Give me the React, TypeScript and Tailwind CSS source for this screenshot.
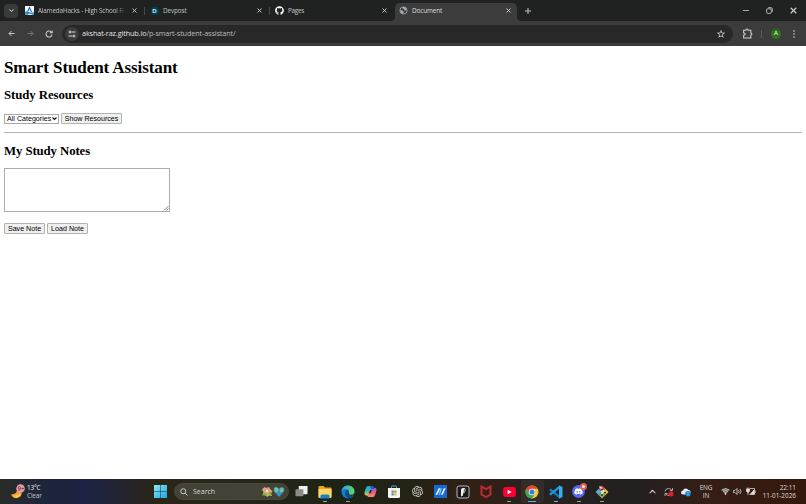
import type { ReactNode } from 'react';
import { FaDiscord, FaGithub } from 'react-icons/fa';
import { SiOpenai } from 'react-icons/si';
import { MdStarBorder } from 'react-icons/md';

function CloseIcon({ className = '' }: { className?: string }) {
  return (
    <svg viewBox="0 0 10 10" className={className} fill="none" stroke="currentColor" strokeWidth="1.8">
      <path d="M1 1l8 8M9 1L1 9" />
    </svg>
  );
}

function AlamedaIcon() {
  return (
    <svg viewBox="0 0 18 18" className="h-[9px] w-[9px] shrink-0">
      <path fill="#f4f8fb" d="M0 0h18v18H0z" />
      <path fill="none" stroke="#1d67a8" strokeWidth="2.2" d="M5 12L9 3l4 9" />
      <path fill="#3b9fd4" d="M0 12q4-3 9 1 5 3 9-1v6h-3l-5-3-6 3H0z" />
      <path fill="none" stroke="#205a9b" strokeWidth="1.500" d="M3 15q3-3 6-1t6-1" />
    </svg>
  );
}

function DevpostIcon() {
  return (
    <span className="flex h-[9px] w-[9px] shrink-0 items-center justify-center">
      <span className="flex h-[8px] w-[8px] items-center justify-center rounded-[3px] bg-[#063e54] pt-px font-['Liberation_Sans',sans-serif] text-[6px] leading-none font-bold text-[#c8edf7]">
        D
      </span>
    </span>
  );
}

function GlobeIcon() {
  return (
    <svg viewBox="0 0 18 18" className="h-[9px] w-[9px] shrink-0">
      <circle cx="9" cy="9" r="7.200" fill="#3c3c3c" stroke="#a9adb3" strokeWidth="1.700" />
      <path fill="#a9adb3" d="M8 2q5-1 7 4l-1 3h-3l-1-3-3-1zM2 8l5 1 3 3-1 2-1 2q-5-2-6-8z" />
    </svg>
  );
}

function Tab({
  icon,
  title,
  className,
  titleClass,
}: {
  icon: ReactNode;
  title: string;
  className: string;
  titleClass: string;
}) {
  return (
    <div className={`flex h-full shrink-0 items-center ${className}`}>
      {icon}
      <span className={`ml-[4px] whitespace-nowrap ${titleClass}`}>{title}</span>
      <CloseIcon className="ml-auto h-[5px] w-[5px] shrink-0 text-[#d5d7d6]" />
    </div>
  );
}

function TabStrip() {
  return (
    <div className="flex h-[21px] shrink-0 items-center bg-[#1f2221] pl-[4px] text-[6.400px] text-[#c3c6c4]">
      <div className="flex h-[14px] w-[14px] shrink-0 items-center justify-center rounded-[4px] bg-[#383b39]">
        <svg viewBox="0 0 10 10" className="h-[5px] w-[5px]" fill="none" stroke="#e1e3e2" strokeWidth="2">
          <path d="M1 3l4 4 4-4" />
        </svg>
      </div>
      <Tab
        icon={<AlamedaIcon />}
        title="AlamedaHacks - High School Fi"
        className="ml-[7px] w-[112px]"
        titleClass="w-[88px] tracking-[-0.180px] [mask-image:linear-gradient(to_right,#000_88%,transparent)]"
      />
      <span className="ml-[7px] h-[8px] w-px shrink-0 bg-[#454846]" />
      <Tab icon={<DevpostIcon />} title="Devpost" className="ml-[5px] w-[112px]" titleClass="tracking-[-0.120px]" />
      <span className="ml-[7px] h-[8px] w-px shrink-0 bg-[#454846]" />
      <Tab
        icon={<FaGithub className="h-[9px] w-[9px] text-white" />}
        title="Pages"
        className="ml-[5px] w-[112px]"
        titleClass="tracking-[-0.300px]"
      />
      <div className="relative ml-[8px] flex h-[18px] w-[122px] shrink-0 self-end rounded-t-[5px] bg-[#3c3c3c]">
        <span className="absolute bottom-0 -left-[4px] h-[4px] w-[4px] bg-[radial-gradient(circle_at_0_0,transparent_4px,#3c3c3c_4px)]" />
        <span className="absolute -right-[4px] bottom-0 h-[4px] w-[4px] bg-[radial-gradient(circle_at_100%_0,transparent_4px,#3c3c3c_4px)]" />
        <Tab
          icon={<GlobeIcon />}
          title="Document"
          className="ml-[4px] w-[112px] pb-[3px]"
          titleClass="tracking-[-0.130px] text-[#dcdcdc]"
        />
      </div>
      <svg viewBox="0 0 10 10" className="ml-[8px] h-[6px] w-[6px]" stroke="#d5d7d6" strokeWidth="1.500">
        <path d="M5 0v10M0 5h10" />
      </svg>
      <div className="mr-[9px] ml-auto flex items-center text-[#c6c8c7]">
        <span className="h-px w-[6px] bg-[#a3a5a4]" />
        <svg viewBox="0 0 12 12" className="ml-[17px] h-[7px] w-[7px]" fill="none" stroke="currentColor" strokeWidth="1.500">
          <rect x="1" y="3" width="8" height="8" rx="2" />
          <path d="M4 1h4q3 0 3 3v4" />
        </svg>
        <CloseIcon className="ml-[17px] h-[7px] w-[7px]" />
      </div>
    </div>
  );
}

function Toolbar() {
  return (
    <div className="flex h-[25px] shrink-0 items-center bg-[#3c3c3c] pl-[8px] text-[#d0d0d0]">
      <svg viewBox="0 0 14 14" className="h-[7px] w-[7px]" fill="none" stroke="currentColor" strokeWidth="1.900">
        <path d="M13 7H2M7 2L2 7l5 5" />
      </svg>
      <svg viewBox="0 0 14 14" className="ml-[12px] h-[7px] w-[7px] text-[#797979]" fill="none" stroke="currentColor" strokeWidth="1.900">
        <path d="M1 7h11M7 2l5 5-5 5" />
      </svg>
      <svg viewBox="0 0 14 14" className="ml-[11px] h-[8px] w-[8px]" fill="none" stroke="currentColor" strokeWidth="1.800">
        <path d="M11.500 4A5.300 5.300 0 1 0 12.300 8M12.500 1v4h-4" />
      </svg>
      <div className="ml-[9px] flex h-[18px] w-[671px] shrink-0 items-center rounded-full bg-[#282828] pl-[3px]">
        <span className="flex h-[14px] w-[14px] items-center justify-center rounded-full bg-[#3c3c3c]">
          <svg viewBox="0 0 16 16" className="h-[8px] w-[8px]" fill="none" stroke="#dedede" strokeWidth="1.900">
            <path d="M7 4h8M1 12h8" />
            <circle cx="4" cy="4" r="2" />
            <circle cx="12" cy="12" r="2" />
          </svg>
        </span>
        <span className="ml-[3px] text-[7.200px] tracking-[-0.090px] text-[#bcbcbc]">
          <span className="text-[#e4e4e4]">akshat-raz.github.io</span>/p-smart-student-assistant/
        </span>
        <MdStarBorder className="mr-[7px] ml-auto h-[10px] w-[10px]" />
      </div>
      <svg viewBox="0 0 20 20" className="ml-[9px] h-[11px] w-[11px] shrink-0" fill="none" stroke="currentColor" strokeWidth="1.900">
        <path d="M3 4h4q0-2 2-2t2 2h5v5q2 0 2 2t-2 2v5H3v-5q3 0 3-2t-3-2z" />
      </svg>
      <span className="ml-[8px] h-[8px] w-px shrink-0 bg-[#5d5d5d]" />
      <span className="ml-[9px] flex h-[10px] w-[10px] shrink-0 items-center justify-center rounded-full bg-[#2f741c] font-['Liberation_Sans',sans-serif] text-[5.800px] leading-none text-white">
        A
      </span>
      <svg viewBox="0 0 4 16" className="ml-[12px] h-[8px] w-[2px]" fill="#d5d5d5">
        <circle cx="2" cy="2" r="1.600" />
        <circle cx="2" cy="8" r="1.600" />
        <circle cx="2" cy="14" r="1.600" />
      </svg>
    </div>
  );
}

function PageButton({ children, className }: { children: ReactNode; className: string }) {
  return (
    <button
      className={`h-[11px] shrink-0 rounded-[1px] border border-[#b2b2b2] bg-[#efefef] pt-px text-center text-[7.110px] leading-[8px] whitespace-nowrap ${className}`}
    >
      {children}
    </button>
  );
}

function Page() {
  return (
    <main className="flex-1 bg-white px-[4px] pt-[12px] font-['Liberation_Sans',Arial,sans-serif] text-black">
      <h1 className="font-['Liberation_Serif',serif] text-[17.070px] leading-[20px] font-bold tracking-[-0.120px]">
        Smart Student Assistant
      </h1>
      <h2 className="mt-[10px] font-['Liberation_Serif',serif] text-[12.800px] leading-[15px] font-bold tracking-[-0.080px]">
        Study Resources
      </h2>
      <div className="mt-[10px] flex h-[11px] items-center gap-[2px]">
        <button className="flex h-[10px] w-[55px] items-center justify-between border border-[#a8a8a8] bg-white pr-px pl-[2px] text-[7.110px] leading-[8px] whitespace-nowrap">
          All Categories
          <svg viewBox="0 0 10 10" className="h-[5px] w-[5px] shrink-0" fill="none" stroke="#111" strokeWidth="2.200">
            <path d="M1 3l4 4 4-4" />
          </svg>
        </button>
        <PageButton className="w-[61px] tracking-[-0.020px]">Show Resources</PageButton>
      </div>
      <hr className="mt-[8px] border-t border-[#b4b4b4]" />
      <h2 className="mt-[11px] font-['Liberation_Serif',serif] text-[12.800px] leading-[15px] font-bold tracking-[-0.100px]">
        My Study Notes
      </h2>
      <div className="mt-[9px] flex h-[43.500px] w-[165.500px] items-end justify-end border border-[#acacac]">
        <svg viewBox="0 0 10 10" className="h-[5px] w-[5px]" stroke="#666" strokeWidth="1.500">
          <path d="M0 9l9-9M5 9l4-4" />
        </svg>
      </div>
      <div className="mt-[11.500px] flex gap-[2px]">
        <PageButton className="w-[41px]">Save Note</PageButton>
        <PageButton className="w-[41px]">Load Note</PageButton>
      </div>
    </main>
  );
}

function FolderIcon() {
  return (
    <svg viewBox="0 0 28 28" className="h-[14px] w-[14px]">
      <path fill="#e7a52c" d="M1 4q0-2 2-2h8l3 3h11q2 0 2 2v17H1z" />
      <path fill="#ffd562" d="M1 8h26v16q0 2-2 2H3q-2 0-2-2z" />
      <path fill="#1681cf" d="M5 27v-5q0-3 3-3h12q3 0 3 3v5z" />
    </svg>
  );
}

function EdgeIcon() {
  return (
    <svg viewBox="0 0 28 28" className="h-[14px] w-[14px]">
      <defs>
        <linearGradient id="edgeTop" x1="0" x2="1" y1="0.300" y2="0.500">
          <stop stopColor="#29a9ed" />
          <stop offset="1" stopColor="#65d45b" />
        </linearGradient>
      </defs>
      <circle cx="14" cy="14" r="13" fill="#147bd1" />
      <path fill="url(#edgeTop)" d="M1 13C2 5 8 1 14 1c8 0 13 6 13 12 0 5-4 7-8 7-3 0-5-1-5-2s2-2 2-5-3-5-7-5c-5 0-7 3-8 5z" />
      <path fill="#0d4d91" d="M9 13c-3 7 2 14 9 13 4-1 6-3 7-5-5 3-11 0-11-5 0-2 1-3 2-4-2-2-6-2-7 1z" />
      <path fill="#1e241b" d="M15 14c-2 3-1 6 3 7 3 1 6 0 9-2l1-3c-3 4-10 5-12 2z" />
    </svg>
  );
}

function CopilotIcon() {
  return (
    <svg viewBox="0 0 28 28" className="h-[13px] w-[13px]">
      <defs>
        <linearGradient id="copilotLeft" x2="0" y2="1">
          <stop stopColor="#249ee9" />
          <stop offset="0.500" stopColor="#35b9a2" />
          <stop offset="1" stopColor="#e4cc45" />
        </linearGradient>
        <linearGradient id="copilotRight" x2="0" y2="1">
          <stop stopColor="#a55be8" />
          <stop offset="0.500" stopColor="#e95294" />
          <stop offset="1" stopColor="#ff9e4c" />
        </linearGradient>
      </defs>
      <path fill="url(#copilotLeft)" d="M9 2h8q3 0 4 4l1 3h-5q-2 0-3 3l-3 8q-1 3-4 3-6 0-6-6 0-3 3-10 1-5 5-5z" />
      <path fill="url(#copilotRight)" d="M21 6q6 0 6 5 0 3-3 10-1 5-6 5h-7q-3 0-4-4 3 0 4-3l3-9q1-4 4-4z" />
      <path fill="#175fc5" d="M13 2h4q3 0 4 4l1 3h-5q-3 0-4-7z" />
      <path fill="#26271c" d="M13 11h4l-3 7h-4z" />
    </svg>
  );
}

function StoreIcon() {
  return (
    <svg viewBox="0 0 28 28" className="h-[14px] w-[14px]">
      <path fill="none" stroke="#37abe2" strokeWidth="2" d="M9 8V3q0-1 1-1h8q1 0 1 1v5" />
      <path fill="#f1f4f5" d="M2 6h24v17q0 3-3 3H5q-3 0-3-3z" />
      <path fill="#ed573b" d="M9 11h4.500v4.500H9z" />
      <path fill="#81b940" d="M14.500 11H19v4.500h-4.500z" />
      <path fill="#279edb" d="M9 16.500h4.500V21H9z" />
      <path fill="#f3b52e" d="M14.500 16.500H19V21h-4.500z" />
    </svg>
  );
}

function BlueAppIcon() {
  return (
    <svg viewBox="0 0 28 28" className="h-[13px] w-[13px]">
      <path fill="#1768cf" d="M0 0h28v28H0z" />
      <path fill="#e5f4ff" d="M3 21l7-14h4L7 21zM15 21l6-14h4l-6 14z" />
      <path fill="#83c3ff" d="M14 7h3l-4 14h-3z" />
    </svg>
  );
}

function FramedAppIcon() {
  return (
    <svg viewBox="0 0 28 28" className="h-[14px] w-[14px]">
      <rect x="2" y="2" width="24" height="24" rx="4" fill="#171a20" stroke="#b5b6bc" strokeWidth="2" />
      <path fill="#f3eee5" d="M10 9q0-3 4-3h3q2 0 2 3l-1 6-4 2v4l-4 2z" />
      <path fill="#9b7b5c" d="M16 7l3 2-1 6-3 2z" />
    </svg>
  );
}

function McAfeeIcon() {
  return (
    <svg viewBox="0 0 28 28" className="h-[14px] w-[14px]">
      <path fill="none" stroke="#bf2b35" strokeWidth="4" d="M5 3v16l9 5 9-5V3l-9 5z" />
    </svg>
  );
}

function ChromeIcon() {
  return (
    <svg viewBox="0 0 28 28" className="h-[14px] w-[14px]">
      <circle cx="14" cy="14" r="13" fill="#f6c72c" />
      <path fill="#e84532" d="M2.700 7.500A13 13 0 0 1 25.300 7.500H14L8.500 17z" />
      <path fill="#38a852" d="M2.700 7.500A13 13 0 0 0 14 27l5.700-10-5.700 3-5.500-3z" />
      <circle cx="14" cy="14" r="6.500" fill="#f4f6f8" />
      <circle cx="14" cy="14" r="5" fill="#347be7" />
    </svg>
  );
}

function CodeIcon() {
  return (
    <svg viewBox="0 0 28 28" className="h-[14px] w-[14px]">
      <path fill="#1479bd" d="M1 9l3-2 17 14v6L1 11z" />
      <path fill="#2295d8" d="M1 19l3 2L21 7V1L1 17z" />
      <path fill="#37adf1" d="M20 1l7 3v20l-7 3z" />
    </svg>
  );
}

function DiscordIcon() {
  return (
    <span className="relative flex h-[13px] w-[13px] items-center justify-center rounded-full bg-[#5865f2]">
      <FaDiscord className="h-[9px] w-[9px] text-white" />
      <span className="absolute -top-[2px] -right-[2px] flex h-[7px] w-[7px] items-center justify-center rounded-full bg-[#df625a]">
        <span className="h-[3px] w-[3px] rounded-full bg-[#ffe7e4]" />
      </span>
    </span>
  );
}

function GitIcon() {
  return (
    <svg viewBox="0 0 28 28" className="h-[14px] w-[14px]">
      <path fill="#e45743" d="M14 1l6.500 6.500L14 14 7.500 7.500z" />
      <path fill="#58a9d9" d="M7.500 7.500L14 14l-6.500 6.500L1 14z" />
      <path fill="#f0c74a" d="M20.500 7.500L27 14l-6.500 6.500L14 14z" />
      <path fill="#83b453" d="M14 14l6.500 6.500L14 27l-6.500-6.500z" />
      <path stroke="#f6f1e9" strokeWidth="3" fill="none" d="M9 3l5 5v13M14 9l6 6" />
      <circle cx="14" cy="9" r="2" fill="#25201e" />
      <circle cx="14" cy="20" r="2" fill="#25201e" />
      <circle cx="20" cy="15" r="2" fill="#25201e" />
    </svg>
  );
}

const apps: { name: string; icon: ReactNode; open?: boolean; active?: boolean }[] = [
  {
    name: 'tasks',
    icon: (
      <svg viewBox="0 0 28 28" className="h-[13px] w-[13px]">
        <rect x="8" y="2" width="19" height="18" rx="1" fill="#eeeeed" />
        <rect x="1" y="9" width="17" height="15" rx="1" fill="#8b8c89" />
      </svg>
    ),
  },
  { name: 'explorer', icon: <FolderIcon />, open: true },
  { name: 'edge', icon: <EdgeIcon />, open: true },
  { name: 'copilot', icon: <CopilotIcon /> },
  { name: 'store', icon: <StoreIcon /> },
  { name: 'chatgpt', icon: <SiOpenai className="h-[11px] w-[11px] text-[#d5d8d4]" /> },
  { name: 'blue', icon: <BlueAppIcon /> },
  { name: 'framed', icon: <FramedAppIcon /> },
  { name: 'mcafee', icon: <McAfeeIcon /> },
  {
    name: 'youtube',
    icon: (
      <svg viewBox="0 0 28 22" className="h-[10px] w-[13px]">
        <rect width="28" height="22" rx="5" fill="#ff0033" />
        <path fill="#fff" d="M10 6l9 5-9 5z" />
      </svg>
    ),
    open: true,
  },
  { name: 'chrome', icon: <ChromeIcon />, active: true },
  { name: 'vscode', icon: <CodeIcon />, open: true },
  { name: 'discord', icon: <DiscordIcon />, open: true },
  { name: 'git', icon: <GitIcon />, open: true },
];

function Tray() {
  return (
    <div className="mr-[10px] ml-auto flex items-center text-[#dedddc]">
      <svg viewBox="0 0 12 12" className="h-[7px] w-[7px]" fill="none" stroke="currentColor" strokeWidth="1.800">
        <path d="M1 9l5-5 5 5" />
      </svg>
      <svg viewBox="0 0 20 20" className="ml-[8px] h-[10px] w-[10px]" fill="none" stroke="#c9c7c6" strokeWidth="1.600">
        <path d="M2 9q1-6 7-6 4 0 7 4M17 2v5h-5M17 11q-1 6-7 6-4 0-7-4M2 18v-5h5" />
        <circle cx="14" cy="14" r="5" fill="#e3202e" stroke="none" />
      </svg>
      <svg viewBox="0 0 20 20" className="ml-[7px] h-[10px] w-[10px]">
        <path fill="#e8ebee" d="M4 15a4 4 0 0 1 0-8 6 6 0 0 1 11-1 4 4 0 0 1 4 5l-2 4z" />
        <circle cx="14" cy="13.500" r="5.500" fill="#1685da" />
        <path stroke="#b9e2ff" strokeWidth="1.200" d="M14 10v7" fill="none" />
      </svg>
      <div className="ml-[8px] w-[14px] text-center text-[6.400px] leading-[8px] tracking-[-0.100px]">
        <div>ENG</div>
        <div>IN</div>
      </div>
      <svg viewBox="0 0 18 18" className="ml-[8px] h-[9px] w-[9px]" fill="none" stroke="currentColor" strokeWidth="1.500">
        <path fill="#777070" stroke="none" d="M1 6q8-6 16 0l-8 9z" />
        <path d="M1 6q8-6 16 0M4 9q5-4 10 0M6.500 12q2.500-2 5 0" />
        <circle cx="9" cy="14" r="1" fill="currentColor" />
      </svg>
      <svg viewBox="0 0 18 18" className="ml-[3px] h-[9px] w-[9px]" fill="none" stroke="currentColor" strokeWidth="1.500">
        <path d="M1 7h3l4-4v12l-4-4H1zM11 6q2 3 0 6M14 4q4 5 0 10" />
      </svg>
      <svg viewBox="0 0 20 18" className="ml-[4px] h-[9px] w-[10px]" fill="none" stroke="currentColor" strokeWidth="1.500">
        <path d="M8 3h9v12H7M18.500 7v5" />
        <path fill="currentColor" d="M1 4h6v4q-1 3-3 3T1 8zM9 14l7-8v8z" />
        <path d="M4 11v5M2.500 1v3M6 1v3" />
      </svg>
      <div className="w-[40px] text-right text-[6.400px] leading-[8px] whitespace-nowrap">
        <div>22:11</div>
        <div>11-01-2026</div>
      </div>
    </div>
  );
}

function Taskbar() {
  return (
    <footer className="flex h-[25px] shrink-0 items-center bg-[linear-gradient(90deg,#292c27_0,#1b243c_6%,#1d2344_11%,#292519_19%,#29261a_28%,#1d2415_41%,#242315_50%,#322016_59%,#252221_69%,#241f1f_79%,#351e15_88%,#35180d_100%)]">
      <div className="flex w-[150px] shrink-0 items-center pl-[10px]">
        <svg viewBox="0 0 32 32" className="h-[16px] w-[16px]">
          <path fill="#f5a52d" d="M14 12q0 8-12 9 4 9 13 7 10-3 8-12-4 3-9-4z" />
          <path fill="#ffcc65" d="M7 23q8 2 14-5-2 11-11 8z" />
          <circle cx="21" cy="9" r="8.500" fill="#e99baa" />
          <path stroke="#704352" strokeWidth="1.700" fill="none" d="M20 10q-4 1-4-2 0-3 3-3t2 5q-1 3-4 3M23 9h5M25.500 7v4" />
        </svg>
        <div className="ml-[1px] pt-px text-[6.400px] leading-[8.500px] tracking-[-0.150px]">
          <div className="text-[#f0f0f0]">13°C</div>
          <div className="text-[#c4c6ce]">Clear</div>
        </div>
      </div>
      <svg viewBox="0 0 26 26" className="ml-[4px] h-[13px] w-[13px] shrink-0">
        <defs>
          <linearGradient id="win" x2="1" y2="1">
            <stop stopColor="#8be8fa" />
            <stop offset="1" stopColor="#1ba4e6" />
          </linearGradient>
        </defs>
        <path fill="url(#win)" d="M0 0h12.500v12.500H0zM13.500 0H26v12.500H13.500zM0 13.500h12.500V26H0zM13.500 13.500H26V26H13.500z" />
      </svg>
      <div className="ml-[7px] flex h-[17px] w-[115px] shrink-0 items-center rounded-full border border-[#4a483a] bg-[#434236] pl-[5px] text-[#d8d7d2]">
        <svg viewBox="0 0 16 16" className="h-[8px] w-[8px]" fill="none" stroke="currentColor" strokeWidth="1.800">
          <circle cx="6.500" cy="6.500" r="5" />
          <path d="M10 10l5 5" />
        </svg>
        <span className="ml-[5px] pt-px text-[7px]">Search</span>
        <svg viewBox="0 0 48 26" className="mr-[3px] ml-auto h-[13px] w-[24px]">
          <path fill="#d4b763" d="M2 9l5-5 4 3 5-3 3 5 4 3-3 5 2 5-6-1-4 3-3-5-6 2 2-7z" />
          <circle cx="12" cy="10" r="5" fill="#ed87b2" />
          <path fill="#73b34b" d="M3 20q5-7 9-2l-2 4zM14 17l7-5-1 8z" />
          <circle cx="12" cy="12" r="2.500" fill="#fff0a3" />
          <path fill="#3f8fc9" d="M36 24L26 13q-3-9 4-9 4 0 6 4 2-4 6-4 7 2 4 9z" />
          <path fill="#74cc80" d="M27 6q5-3 8 2l-1 5-5 2zM39 6l6 1-1 6-6 2z" />
        </svg>
      </div>
      <div className="ml-[1px] flex h-full items-center">
        {apps.map((app) => (
          <div
            key={app.name}
            className={`relative flex h-[23px] w-[23.100px] shrink-0 items-center justify-center rounded-[3px] ${
              app.active ? 'bg-white/5' : ''
            }`}
          >
            {app.icon}
            {app.open && <span className="absolute bottom-[1px] h-px w-[4px] rounded-full bg-[#a9aaa6]" />}
            {app.active && <span className="absolute bottom-[1px] h-[1.500px] w-[8px] rounded-full bg-[#52b7e8]" />}
          </div>
        ))}
      </div>
      <Tray />
    </footer>
  );
}

export default function App() {
  return (
    <div className="flex h-[504px] w-[806px] flex-col overflow-hidden font-['Open_Sans','Noto_Sans',sans-serif]">
      <TabStrip />
      <Toolbar />
      <Page />
      <Taskbar />
    </div>
  );
}
